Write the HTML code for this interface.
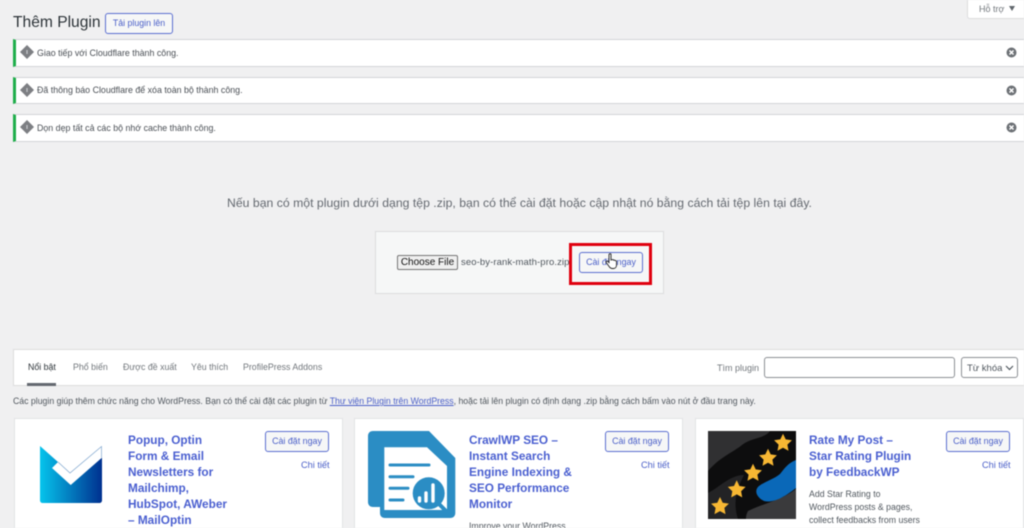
<!DOCTYPE html>
<html lang="vi">
<head>
<meta charset="utf-8">
<title>Thêm Plugin</title>
<style>
*{box-sizing:border-box}
html,body{margin:0;padding:0}
body{width:1024px;height:528px;overflow:hidden;background:#f0f0f1;position:relative;font-family:"Liberation Sans","Noto Sans CJK SC",sans-serif;color:#50575e;font-size:9px}
.a{position:absolute;white-space:nowrap}
.wrap{position:absolute;left:0;top:0;width:1024px;height:528px;overflow:hidden;filter:blur(.4px)}
.notice{position:absolute;left:13px;width:1011px;height:28px;background:#fff;border:1px solid #d3d5d8;border-left:3px solid #1fae4b;border-right:0}
.notice span{position:absolute;left:21px;top:6px;font-size:8.850px;line-height:13px;color:#4a4f55;white-space:nowrap}
.notice svg.d{position:absolute;left:3px;top:4px}
.notice svg.x{position:absolute;right:7px;top:7px}
.btn{position:absolute;border:1px solid #5b6fd0;border-radius:3px;background:#f6f7f7;color:#4a5fc8;font-size:8.900px;text-align:center;white-space:nowrap}
.card{position:absolute;top:418px;height:110px;width:329px;background:#fff;border:1px solid #e2e3e5;border-bottom:0}
.t{position:absolute;font-size:11.800px;line-height:16px;font-weight:bold;color:#4a5fd0;white-space:nowrap}
.dt{position:absolute;font-size:9.200px;color:#4a5fc8;white-space:nowrap}
.desc{position:absolute;font-size:8.750px;line-height:13px;color:#50575e;white-space:nowrap}
.tab{position:absolute;top:361px;font-size:8.800px;line-height:13px;color:#72777c;white-space:nowrap}
</style>
</head>
<body>
<div class="wrap">

<div class="a" style="left:13px;top:13px;font-size:15.600px;line-height:20px;color:#2c3338">Thêm Plugin</div>
<div class="btn" style="left:105px;top:13px;width:68px;height:21px;line-height:19px;font-size:8.800px">Tải plugin lên</div>

<div class="a" style="left:967px;top:0;width:57px;height:19px;background:#fff;border:1px solid #dcdcde;border-top:0;border-right:0;border-radius:0 0 0 3px"></div>
<div class="a" style="left:979px;top:3px;font-size:9px;line-height:13px;color:#72777c">Hỗ trợ</div>
<svg class="a" style="left:1009px;top:6px" width="6" height="5"><path d="M0 0H6L3 5Z" fill="#60666c"/></svg>

<div class="notice" style="top:39px"><svg class="d" width="16" height="16" viewBox="0 0 16 16"><path d="M8 1L15 8 8 15 1 8Z" fill="#7d7f83"/><path d="M8 6v4" stroke="#c9cbcd" stroke-width="1.200"/></svg><span style="top:6.500px">Giao tiếp với Cloudflare thành công.</span><svg class="x" width="11" height="11" viewBox="0 0 11 11"><circle cx="5.500" cy="5.500" r="5" fill="#6c7075"/><path d="M3.500 3.500l4 4M7.500 3.500l-4 4" stroke="#fff" stroke-width="1.500"/></svg></div>
<div class="notice" style="top:77px;height:27px"><svg class="d" width="16" height="16" viewBox="0 0 16 16"><path d="M8 1L15 8 8 15 1 8Z" fill="#7d7f83"/><path d="M8 6v4" stroke="#c9cbcd" stroke-width="1.200"/></svg><span>Đã thông báo Cloudflare để xóa toàn bộ thành công.</span><svg class="x" width="11" height="11" viewBox="0 0 11 11"><circle cx="5.500" cy="5.500" r="5" fill="#6c7075"/><path d="M3.500 3.500l4 4M7.500 3.500l-4 4" stroke="#fff" stroke-width="1.500"/></svg></div>
<div class="notice" style="top:114px"><svg class="d" width="16" height="16" viewBox="0 0 16 16"><path d="M8 1L15 8 8 15 1 8Z" fill="#7d7f83"/><path d="M8 6v4" stroke="#c9cbcd" stroke-width="1.200"/></svg><span style="top:6.500px">Dọn dẹp tất cả các bộ nhớ cache thành công.</span><svg class="x" width="11" height="11" viewBox="0 0 11 11"><circle cx="5.500" cy="5.500" r="5" fill="#6c7075"/><path d="M3.500 3.500l4 4M7.500 3.500l-4 4" stroke="#fff" stroke-width="1.500"/></svg></div>

<div class="a" style="left:0;width:1039px;top:194.500px;text-align:center;font-size:12.200px;line-height:17px;color:#646970;letter-spacing:.03px">Nếu bạn có một plugin dưới dạng tệp .zip, bạn có thể cài đặt hoặc cập nhật nó bằng cách tải tệp lên tại đây.</div>

<div class="a" style="left:375px;top:231px;width:289px;height:63px;background:#f6f7f7;border:1px solid #dcdcde"></div>
<div class="a" style="left:397px;top:255px;width:61px;height:15px;background:#efefef;border:1px solid #767676;border-radius:2px;font-size:10px;line-height:13px;text-align:center;color:#111">Choose File</div>
<div class="a" style="left:461px;top:256px;font-size:9.500px;line-height:13px;color:#50575e;letter-spacing:.1px">seo-by-rank-math-pro.zip</div>
<div class="a" style="left:569px;top:243px;width:83px;height:42px;border:3px solid #e0000f;background:#f6f7f7"></div>
<div class="btn" style="left:579px;top:252px;width:64px;height:21px;line-height:19px">Cài đặt ngay</div>
<svg class="a" style="left:605px;top:253px" width="13" height="17" viewBox="0 0 13 17"><path d="M4 1.500c0-1 2-1 2 0V7l1-.3c.6-.2 1.300.1 1.500.5.6-.3 1.300-.1 1.500.4.8-.2 1.500.3 1.500 1V12c0 2-1.200 3.500-3 3.500H7c-1.200 0-2-.7-2.700-1.700L1.200 9.500c-.6-1 .7-2 1.600-1.100L4 9.600Z" fill="#fff" stroke="#222" stroke-width=".9"/></svg>

<div class="a" style="left:13px;top:349px;width:1011px;height:37px;background:#fff;border:1px solid #dcdcde;border-right:0"></div>
<div class="tab" style="left:28px;color:#2c3338">Nổi bật</div>
<div class="a" style="left:27px;top:383px;width:29px;height:3px;background:#646970"></div>
<div class="tab" style="left:73px">Phổ biến</div>
<div class="tab" style="left:123px">Được đề xuất</div>
<div class="tab" style="left:191px">Yêu thích</div>
<div class="tab" style="left:243px">ProfilePress Addons</div>
<div class="a" style="left:717px;top:362px;font-size:9px;line-height:13px;color:#72777c">Tìm plugin</div>
<div class="a" style="left:764px;top:357px;width:191px;height:21px;background:#fff;border:1px solid #8c8f94;border-radius:3px"></div>
<div class="a" style="left:961px;top:357px;width:57px;height:21px;background:#fff;border:1px solid #8c8f94;border-radius:3px;font-size:9.500px;line-height:21px;padding-left:5px;color:#50575e">Từ khóa</div>
<svg class="a" style="left:1005px;top:365px" width="9" height="6"><path d="M1 1l3.500 3.500L8 1" fill="none" stroke="#50575e" stroke-width="1.200"/></svg>

<div class="a" style="left:13px;top:395px;font-size:8.730px;line-height:13px;color:#50575e">Các plugin giúp thêm chức năng cho WordPress. Bạn có thể cài đặt các plugin từ <span style="color:#4a5fc8;text-decoration:underline">Thư viện Plugin trên WordPress</span>, hoặc tải lên plugin có định dạng .zip bằng cách bấm vào nút ở đầu trang này.</div>

<div class="card" style="left:14px"></div>
<div class="card" style="left:354px"></div>
<div class="card" style="left:695px"></div>

<svg class="a" style="left:40px;top:446px" width="62" height="57" viewBox="0 0 62 57">
<defs><linearGradient id="g" x1="0" x2="1" y1="0" y2="0"><stop offset="0" stop-color="#06c4ec"/><stop offset="1" stop-color="#00308f"/></linearGradient></defs>
<path d="M0 0L18 16 12 22 30.700 39 62 11.600V54c0 2-1 3-3 3H3c-2 0-3-1-3-3Z" fill="url(#g)"/>
<path d="M18 16L30 27 61.500 .5V11.600" fill="none" stroke="#7fa6cf" stroke-width=".7"/>
</svg>
<div class="t" style="left:128px;top:432px">Popup, Optin<br>Form &amp; Email<br>Newsletters for<br>Mailchimp,<br>HubSpot, AWeber<br>– MailOptin</div>
<div class="btn" style="left:265px;top:431px;width:64px;height:21px;line-height:19px">Cài đặt ngay</div>
<div class="dt" style="left:301px;top:459.500px">Chi tiết</div>

<svg class="a" style="left:368px;top:431px" width="88" height="88" viewBox="0 0 88 88">
<path d="M5 0H61L87.300 27V82c0 3-2 5-5 5H17c-3 0-5-2-5-5V76H5c-3 0-5-2-5-5V5C0 2 2 0 5 0Z" fill="#2b8dc4"/>
<path d="M16.300 16.300H59L79 35V79H16.300Z" fill="#fff"/>
<g stroke="#2b8dc4" stroke-width="3" stroke-linecap="round"><path d="M22 34H61M22 45.700H45M22 57.300H40M22 69H35"/></g>
<circle cx="60.700" cy="62.300" r="16" fill="#2b8dc4"/>
<path d="M72 74l6 6" stroke="#2b8dc4" stroke-width="4" stroke-linecap="round"/>
<g stroke="#fff" stroke-width="3.400" stroke-linecap="round"><path d="M51.500 67v3M58 62v8M65 54v16"/></g>
</svg>
<div class="t" style="left:469px;top:432px">CrawlWP SEO –<br>Instant Search<br>Engine Indexing &amp;<br>SEO Performance<br>Monitor</div>
<div class="btn" style="left:605px;top:431px;width:64px;height:21px;line-height:19px">Cài đặt ngay</div>
<div class="dt" style="left:641px;top:459.500px">Chi tiết</div>
<div class="desc" style="left:469px;top:520px">Improve your WordPress</div>

<svg class="a" style="left:708px;top:431px" width="88" height="88" viewBox="0 0 88 88">
<rect width="88" height="88" fill="#0d0d0e"/>
<path d="M0 0H62C56 8 44 6 34 14 24 22 12 26 0 40Z" fill="#303032"/>
<path d="M0 62C12 56 22 44 36 44 30 56 24 70 30 88H0Z" fill="#232325"/>
<path d="M88 58C72 70 56 72 40 80 38 84 38 86 38 88H88Z" fill="#3a3a3c"/>
<path d="M88 29C80 32 76 38 72 43 66 48 58 50 51 55 46 59 48 66 56 70 64 72 74 68 88 57Z" fill="#0a68b8"/>
<g fill="#f7b733">
<path transform="translate(75 11.700)" d="M0-9l2.700 5.700 6.200.9-4.500 4.300 1.100 6.200L0 5.100-5.500 8.100l1.100-6.200-4.500-4.300 6.200-.9Z"/>
<path transform="translate(60 26.700)" d="M0-9l2.700 5.700 6.200.9-4.500 4.300 1.100 6.200L0 5.100-5.500 8.100l1.100-6.200-4.500-4.300 6.200-.9Z"/>
<path transform="translate(45 41.700)" d="M0-9l2.700 5.700 6.200.9-4.500 4.300 1.100 6.200L0 5.100-5.500 8.100l1.100-6.200-4.500-4.300 6.200-.9Z"/>
<path transform="translate(28.700 58.300)" d="M0-9l2.700 5.700 6.200.9-4.500 4.300 1.100 6.200L0 5.100-5.500 8.100l1.100-6.200-4.500-4.300 6.200-.9Z"/>
<path transform="translate(12 75)" d="M0-9l2.700 5.700 6.200.9-4.500 4.300 1.100 6.200L0 5.100-5.500 8.100l1.100-6.200-4.500-4.300 6.200-.9Z"/>
</g>
</svg>
<div class="t" style="left:809px;top:432px">Rate My Post –<br>Star Rating Plugin<br>by FeedbackWP</div>
<div class="btn" style="left:946px;top:431px;width:64px;height:21px;line-height:19px">Cài đặt ngay</div>
<div class="dt" style="left:982px;top:459.500px">Chi tiết</div>
<div class="desc" style="left:809px;top:488px">Add Star Rating to<br>WordPress posts &amp; pages,<br>collect feedbacks from users</div>

</div>
</body>
</html>
